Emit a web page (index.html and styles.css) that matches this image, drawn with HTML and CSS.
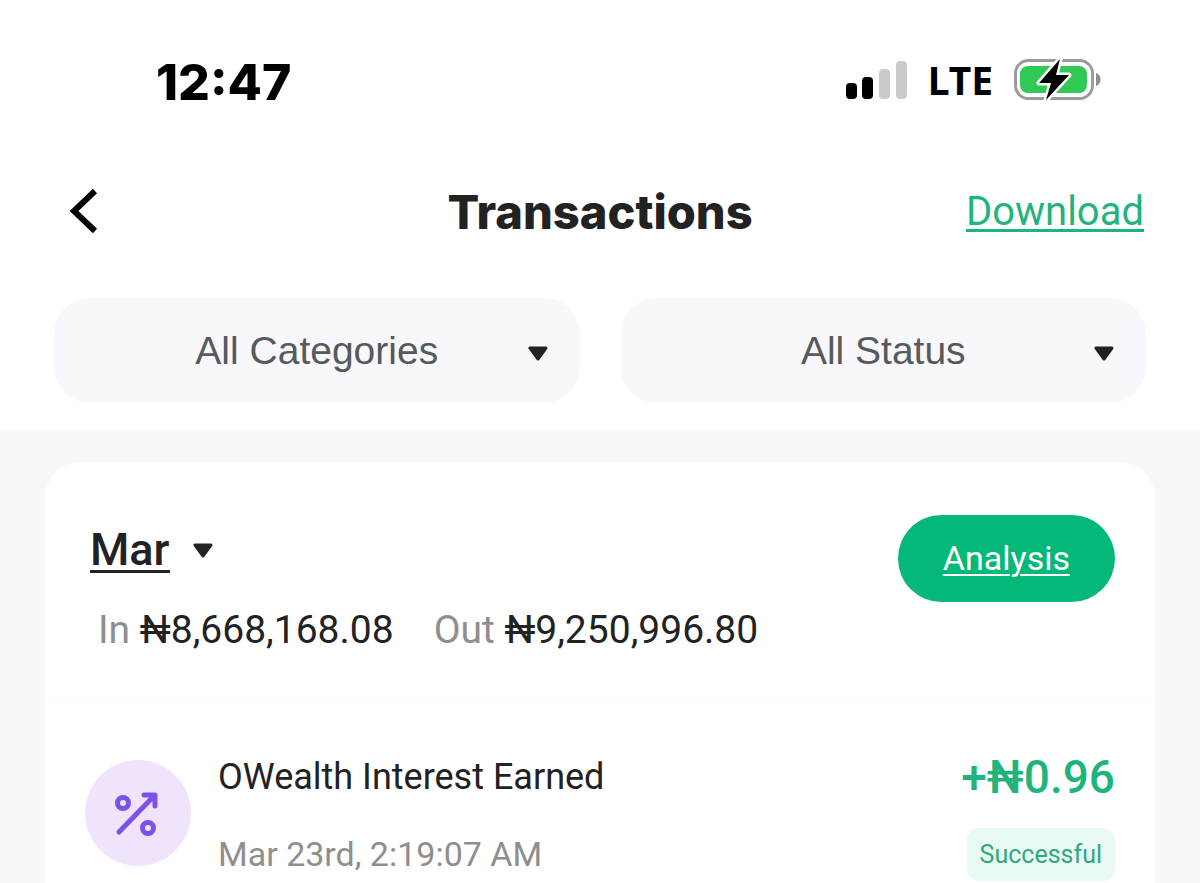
FILE: index.html
```html
<!DOCTYPE html>
<html lang="en">
<head>
    <meta charset="UTF-8">
    <meta name="viewport" content="width=device-width, initial-scale=1.0">
    <title>Transactions</title>
    <link rel="stylesheet" href="styles.css">
</head>
<body>
    <header class="top">
        <div class="status-bar">
            <span class="time">12:47</span>
            <div class="status-icons">
                <svg class="signal" width="62" height="42" viewBox="0 0 62 42" aria-hidden="true">
                    <rect x="1" y="24" width="11" height="16" rx="4" fill="#000"/>
                    <rect x="17" y="18" width="11" height="22" rx="4" fill="#000"/>
                    <rect x="34" y="10" width="11" height="30" rx="4" fill="#cbcbcb"/>
                    <rect x="51" y="2" width="11" height="38" rx="4" fill="#cbcbcb"/>
                </svg>
                <span class="network">LTE</span>
                <svg class="battery" width="88" height="44" viewBox="0 0 88 44" aria-hidden="true">
                    <rect x="1.5" y="2.5" width="77" height="38" rx="13" fill="#fff" stroke="#9b9b9b" stroke-width="3"/>
                    <rect x="6" y="8" width="67" height="27" rx="8" fill="#30c955"/>
                    <path d="M82 15c6 2 6 11 0 13z" fill="#8e8e8e"/>
                    <path d="M46 1 25 25h12l-5 17 23-25H42z" fill="#000" stroke="#fff" stroke-width="5" stroke-linejoin="round" paint-order="stroke"/>
                </svg>
            </div>
        </div>
        <div class="nav">
            <button class="back" type="button" aria-label="Back">
                <svg width="30" height="46" viewBox="0 0 30 46" fill="none" stroke="#000" stroke-width="6"><path d="M27 3 6 23l21 20"/></svg>
            </button>
            <h1 class="title">Transactions</h1>
            <a class="download" href="#">Download</a>
        </div>
        <div class="filters">
            <div class="filter">
                <select class="filter-select" aria-label="Category">
                    <option>All Categories</option>
                </select>
                <svg class="caret" width="20" height="16" viewBox="0 0 20 16" aria-hidden="true"><path d="M2 2h16l-8 11z"/></svg>
            </div>
            <div class="filter">
                <select class="filter-select" aria-label="Status">
                    <option>All Status</option>
                </select>
                <svg class="caret" width="20" height="16" viewBox="0 0 20 16" aria-hidden="true"><path d="M2 2h16l-8 11z"/></svg>
            </div>
        </div>
    </header>

    <main class="content">
        <section class="card">
            <div class="summary">
                <div>
                    <div class="month">
                        <select class="month-select" aria-label="Month">
                            <option>Mar</option>
                        </select>
                        <svg class="month-caret" width="20" height="16" viewBox="0 0 20 16" aria-hidden="true"><path d="M2 2h16l-8 11z"/></svg>
                    </div>
                    <div class="totals">
                        <p class="total"><span class="label">In</span> ₦8,668,168.08</p>
                        <p class="total"><span class="label">Out</span> ₦9,250,996.80</p>
                    </div>
                </div>
                <a class="analysis" href="#">Analysis</a>
            </div>

            <div class="transaction">
                <div class="icon">
                    <svg width="48" height="48" viewBox="0 0 48 48" fill="none" stroke="#7a52e8" stroke-width="5" stroke-linecap="round" aria-hidden="true">
                        <circle cx="9" cy="14" r="5.5"/>
                        <circle cx="34" cy="39" r="5.5"/>
                        <path d="M5 43 40 7M30 6h11v11" stroke-linejoin="round"/>
                    </svg>
                </div>
                <div class="details">
                    <p class="name">OWealth Interest Earned</p>
                    <p class="date">Mar 23rd, 2:19:07 AM</p>
                </div>
                <div class="result">
                    <p class="amount">+₦0.96</p>
                    <span class="badge">Successful</span>
                </div>
            </div>
        </section>
    </main>
</body>
</html>
```
FILE: styles.css
```css
* {
    box-sizing: border-box;
}
body {
    margin: 0;
    min-height: 100vh;
    display: flex;
    flex-direction: column;
    font-family: Roboto, "Liberation Sans", sans-serif;
    font-size: 39px;
    color: #222;
    background-color: #f7f7fc;
}
p, h1 {
    margin: 0;
}
select {
    appearance: none;
    border: none;
    cursor: pointer;
}
.top {
    padding: 50px 54px 27px;
    background-color: #fff;
}
.status-bar {
    display: flex;
    justify-content: space-between;
    align-items: center;
    height: 64px;
    padding: 0 44px 0 102px;
    color: #000;
}
.time {
    font-family: Inter, sans-serif;
    font-size: 50px;
    font-weight: 800;
    line-height: 64px;
}
.status-icons {
    display: flex;
    align-items: center;
    gap: 21px;
    height: 60px;
    align-self: flex-start;
}
.network {
    font-family: "Noto Sans", sans-serif;
    font-size: 39px;
    font-weight: 700;
    line-height: 50px;
}
.nav {
    display: grid;
    grid-template-columns: 1fr auto 1fr;
    align-items: center;
    height: 64px;
    margin-top: 65px;
}
.back {
    display: flex;
    justify-self: start;
    padding: 0 14px;
    border: none;
    background: none;
    cursor: pointer;
}
.title {
    font-family: Inter, sans-serif;
    font-size: 47px;
    font-weight: 800;
}
.download {
    justify-self: end;
    padding-right: 2px;
    font-size: 40px;
    color: #1fb47c;
    text-decoration-thickness: 3px;
    text-underline-offset: 4px;
}
.filters {
    display: grid;
    grid-template-columns: 1fr 1fr;
    gap: 41px;
    margin-top: 55px;
}
.filter {
    position: relative;
}
.filter-select {
    display: block;
    width: 100%;
    height: 105px;
    padding: 0;
    border-radius: 36px;
    background-color: #f7f7fc;
    color: #58595b;
    font-family: "Liberation Sans", Arial, sans-serif;
    font-size: 39px;
    text-align: center;
    text-align-last: center;
}
.caret {
    position: absolute;
    top: 48px;
    right: 32px;
    pointer-events: none;
}
.caret path, .month-caret path {
    fill: #222;
    stroke: #222;
    stroke-width: 3;
    stroke-linejoin: round;
}
.content {
    flex: 1;
    display: flex;
    padding: 32px 45px 0;
}
.card {
    flex: 1;
    border-radius: 36px 36px 0 0;
    background-color: #fff;
}
.summary {
    display: flex;
    justify-content: space-between;
    align-items: flex-start;
    padding: 53px 40px 45px 45px;
    border-bottom: 2px solid #fafafa;
}
.month {
    display: flex;
    align-items: center;
    gap: 23px;
    height: 72px;
}
.month-select {
    padding: 0;
    border-bottom: 3px solid #222;
    border-radius: 0;
    background: none;
    color: #222;
    font-family: Roboto, sans-serif;
    font-size: 45px;
    font-weight: 500;
    line-height: 42px;
    height: 44px;
}
.totals {
    display: flex;
    gap: 40px;
    padding-left: 8px;
    margin-top: 18px;
}
.total {
    line-height: 50px;
}
.label {
    color: #8e8e8e;
}
.analysis {
    padding: 0 45px;
    border-radius: 44px;
    background-color: #04b977;
    color: #fff;
    font-size: 34px;
    line-height: 87px;
    text-decoration-thickness: 2px;
    text-underline-offset: 4px;
}
.transaction {
    display: flex;
    gap: 27px;
    padding: 47px 40px 0;
}
.icon {
    display: flex;
    justify-content: center;
    align-items: center;
    width: 106px;
    height: 106px;
    margin-top: 11px;
    border-radius: 50%;
    background-color: #f0e4fd;
}
.details {
    flex: 1;
}
.name {
    font-size: 36px;
    line-height: 56px;
}
.date {
    margin-top: 22px;
    font-size: 34px;
    line-height: 54px;
    color: #8e8e8e;
}
.result {
    display: flex;
    flex-direction: column;
    align-items: flex-end;
}
.amount {
    font-size: 46px;
    font-weight: 500;
    line-height: 56px;
    color: #1fb47c;
}
.badge {
    margin-top: 23px;
    padding: 0 13px;
    border-radius: 12px;
    background-color: #e9faf4;
    color: #2fa97b;
    font-size: 25px;
    line-height: 53px;
}
```
